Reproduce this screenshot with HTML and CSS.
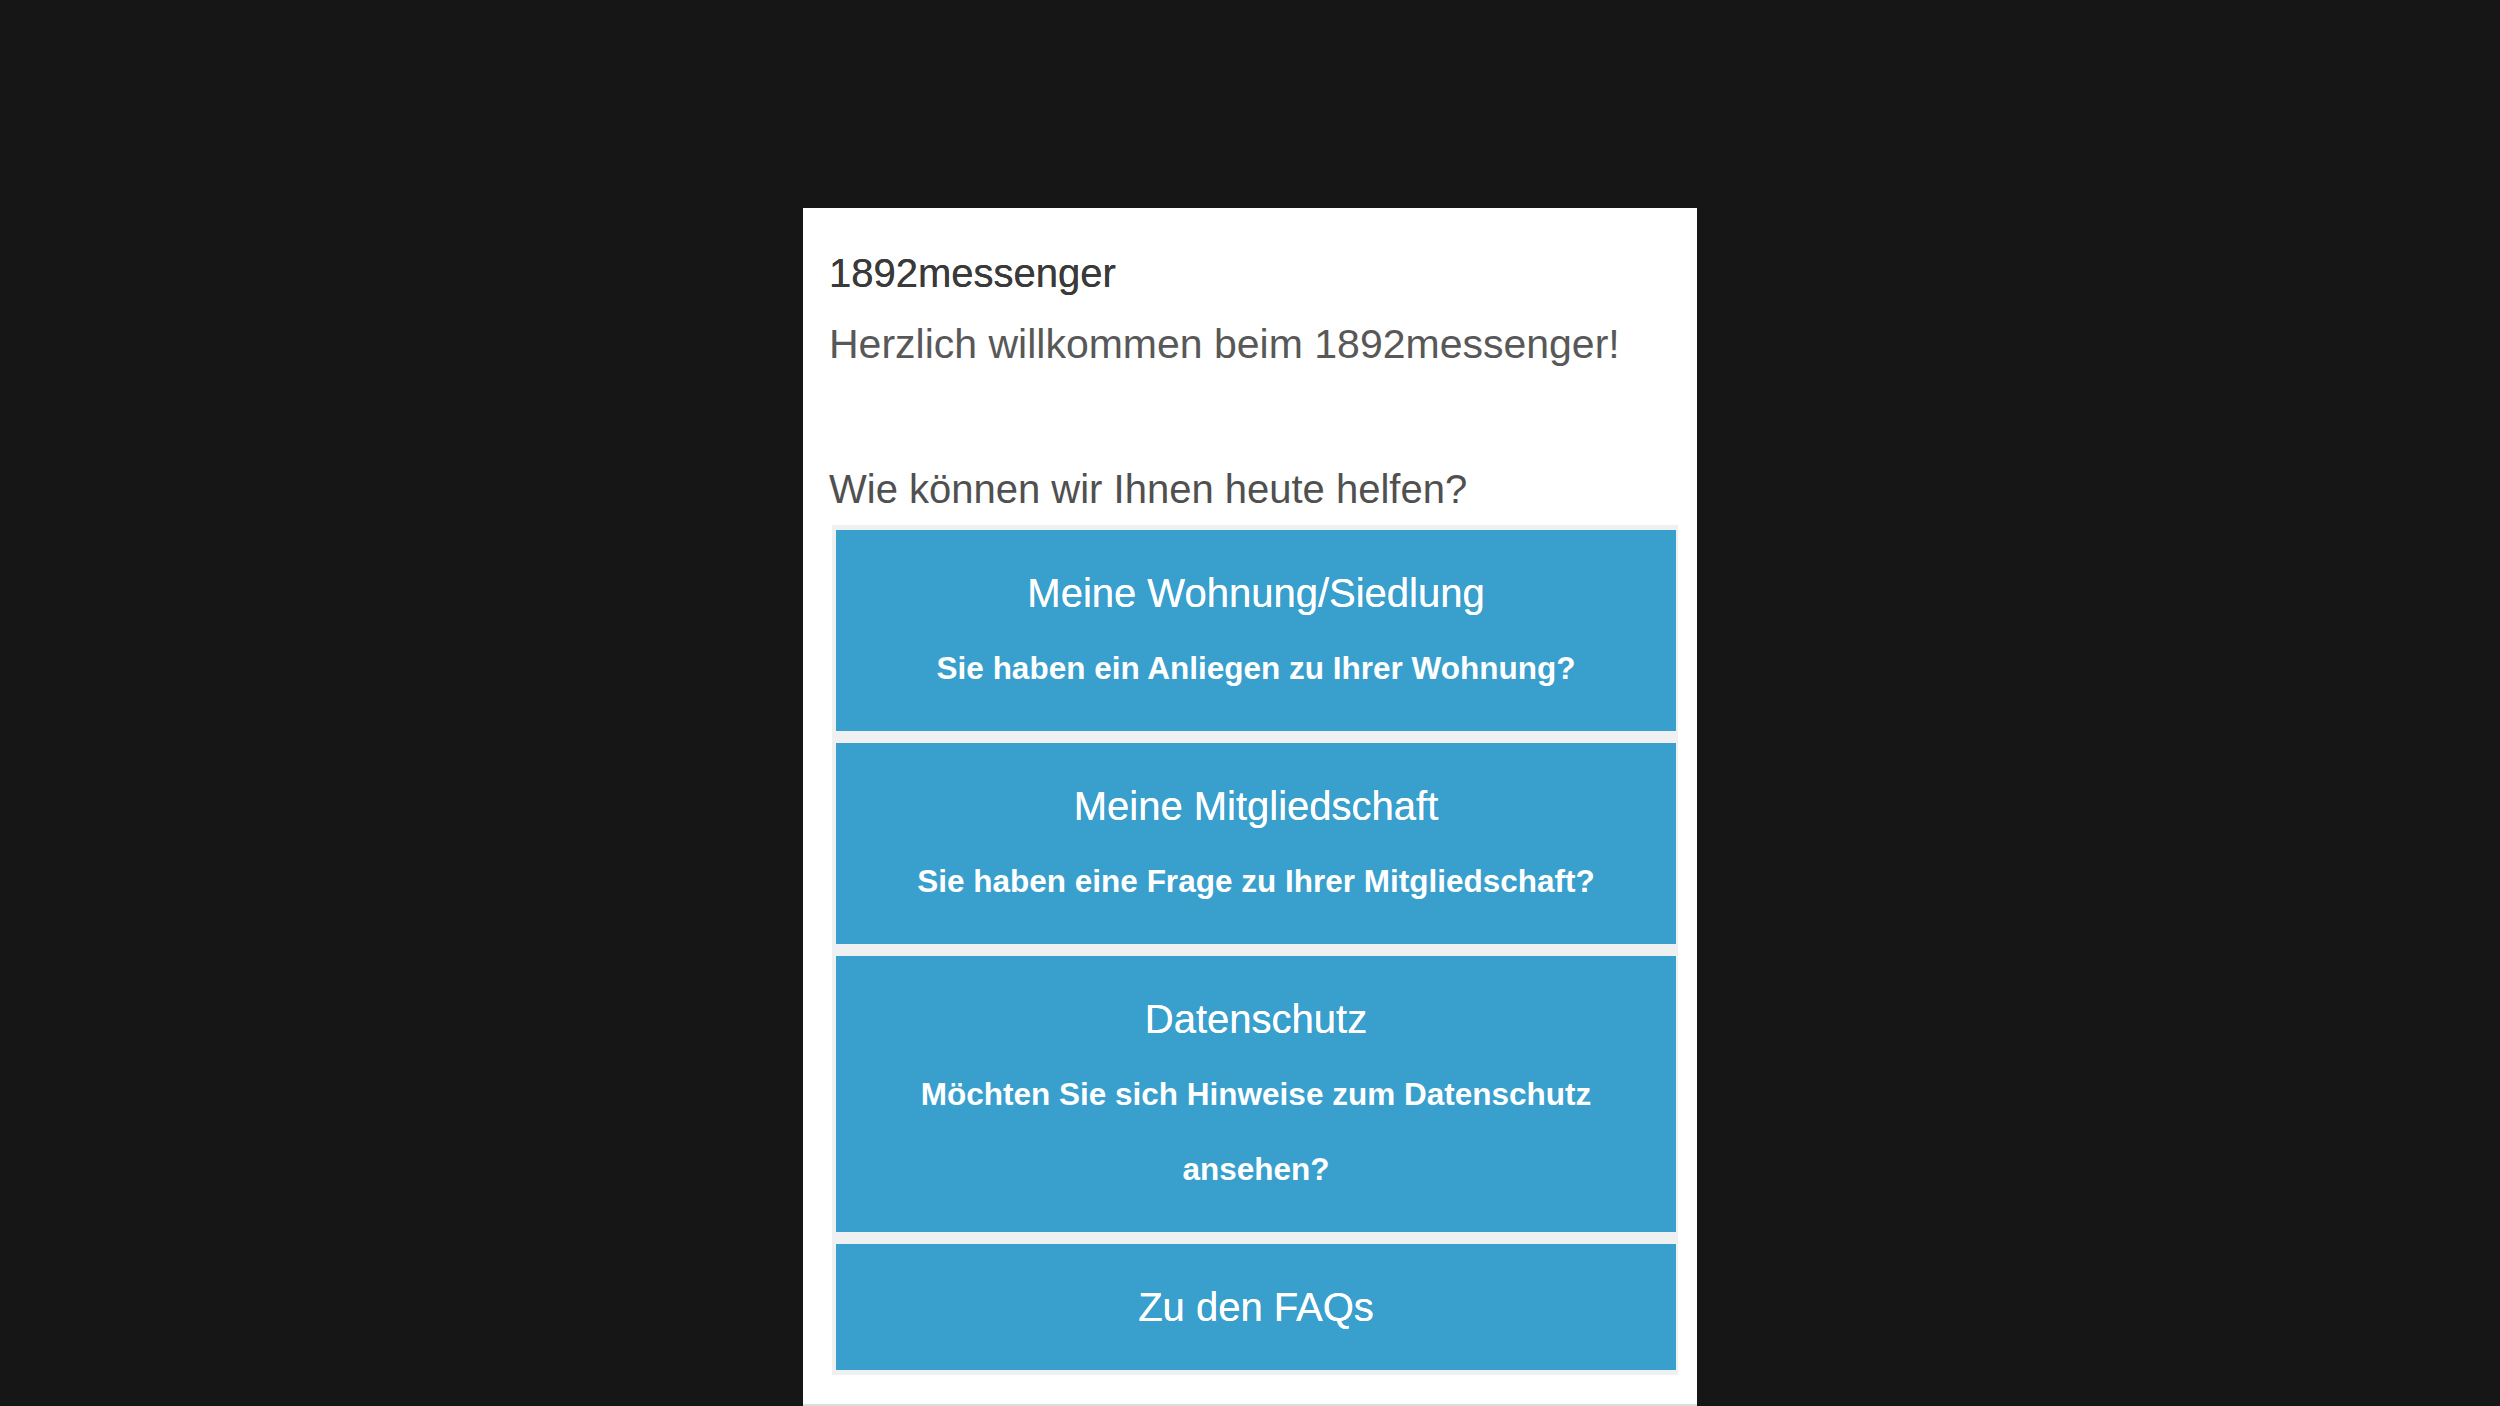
FILE: index.html
```html
<!doctype html>
<html>
<head>
	<meta charset="utf-8">
	<title>1892messenger</title>
	<link rel="stylesheet" href="styles.css">
</head>

<body>
	<div class="panel">
		<div class="brand">1892messenger</div>
		<div class="welcome">Herzlich willkommen beim 1892messenger!</div>
		<div class="question">Wie können wir Ihnen heute helfen?</div>
		<div class="choices">
			<div class="choice">
				<div class="choice-title">Meine Wohnung/Siedlung</div>
				<div class="choice-text">Sie haben ein Anliegen zu Ihrer Wohnung?</div>
			</div>
			<div class="choice">
				<div class="choice-title">Meine Mitgliedschaft</div>
				<div class="choice-text">Sie haben eine Frage zu Ihrer Mitgliedschaft?</div>
			</div>
			<div class="choice">
				<div class="choice-title">Datenschutz</div>
				<div class="choice-text">Möchten Sie sich Hinweise zum Datenschutz ansehen?</div>
			</div>
			<div class="choice">
				<div class="choice-title">Zu den FAQs</div>
			</div>
		</div>
	</div>
</body>
</html>
```

FILE: styles.css
```css
html, body {
	margin: 0;
	background-color: #161616;
	font-family: "Liberation Sans", Arial, sans-serif;
}
.panel {
	width: 894px;
	box-sizing: border-box;
	margin: 208px auto 0;
	padding: 41px 19px 29px 26px;
	background-color: #fff;
	border-bottom: 2px solid #dcdcdc;
}
.brand {
	font-size: 40px;
	line-height: 48px;
	color: #3a3a3a;
	text-shadow: 0 0 0.5px #3a3a3a;
}
.welcome {
	margin-top: 23px;
	font-size: 41px;
	line-height: 48px;
	color: #585858;
}
.question {
	margin-top: 97px;
	font-size: 40px;
	line-height: 48px;
	color: #505050;
}
.choices {
	display: flex;
	flex-direction: column;
	gap: 12px;
	margin: 12px 0 0 3px;
	padding: 5px 2px 5px 4px;
	background-color: #eef0f1;
}
.choice {
	padding: 26px 30px 25px;
	background-color: #399fcd;
	color: #fff;
	text-align: center;
}
.choice-title {
	font-size: 40px;
	line-height: 75px;
	text-shadow: 0 0 0.6px #fff;
}
.choice-text {
	font-size: 31.5px;
	font-weight: bold;
	line-height: 75px;
}
```
